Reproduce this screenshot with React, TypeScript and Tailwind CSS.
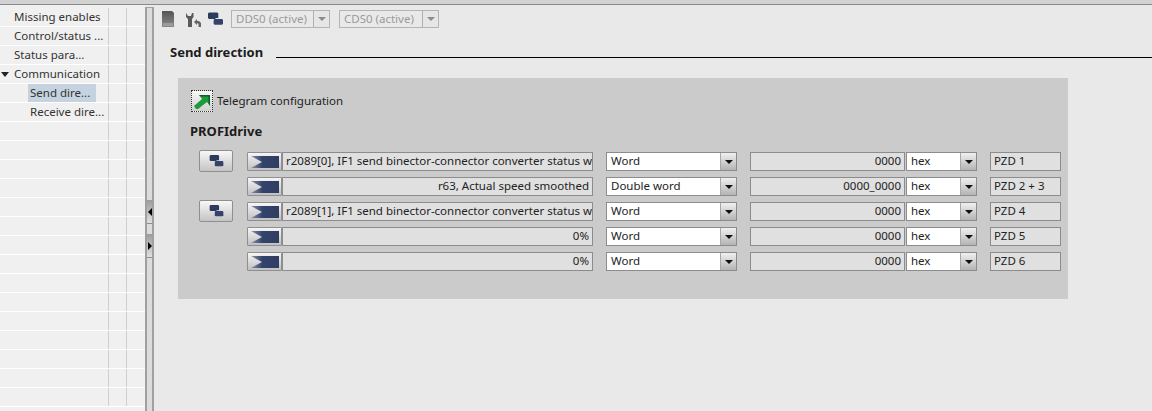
const font = { fontFamily: '"Noto Sans", "Open Sans", sans-serif' };

const navRows = [
  { label: "Missing enables", indent: "pl-[14px]" },
  { label: "Control/status ...", indent: "pl-[14px]" },
  { label: "Status para...", indent: "pl-[14px]" },
  { label: "Communication", indent: "pl-[14px]", open: true },
  { label: "Send dire...", indent: "pl-[28px]", selected: true },
  { label: "Receive dire...", indent: "pl-[30px]" },
];

const rows = [
  { button: true, source: "r2089[0], IF1 send binector-connector converter status word", left: true, type: "Word", value: "0000", pzd: "PZD 1" },
  { button: false, source: "r63, Actual speed smoothed", left: false, type: "Double word", value: "0000_0000", pzd: "PZD 2 + 3" },
  { button: true, source: "r2089[1], IF1 send binector-connector converter status word", left: true, type: "Word", value: "0000", pzd: "PZD 4" },
  { button: false, source: "0%", left: false, type: "Word", value: "0000", pzd: "PZD 5" },
  { button: false, source: "0%", left: false, type: "Word", value: "0000", pzd: "PZD 6" },
];

function BlocksIcon({ className }: { className: string }) {
  return (
    <svg viewBox="0 0 16 14" className={className}>
      <path d="M1 0 H10 L11 1 V6 H8 V7 H1 L0 6 V1 Z" fill="#2c3a5c" />
      <path d="M7 7 H15 L16 8 V12 L15 13 H7 L6 12 V8 Z" fill="#34436b" />
    </svg>
  );
}

function ArrowButton() {
  return (
    <div className="h-[19px] w-[35px] shrink-0 rounded-[1px] border border-[#8f8f8f] bg-gradient-to-b from-[#f6f6f6] to-[#c0c0c0] flex items-center justify-center">
      <svg viewBox="0 0 28 12" className="w-[28px] h-[12px]">
        <defs>
          <linearGradient id="pennant" x1="0" x2="1" y1="0" y2="0">
            <stop offset="0" stopColor="#8a93a8" />
            <stop offset="0.4" stopColor="#34436b" />
            <stop offset="1" stopColor="#2f3d62" />
          </linearGradient>
        </defs>
        <path d="M0 0 H28 V12 H0 L11 6 Z" fill="url(#pennant)" />
      </svg>
    </div>
  );
}

function DropArrow({ disabled }: { disabled?: boolean }) {
  return (
    <div className={`w-[16px] h-full shrink-0 flex items-center justify-center border-l ${disabled ? "border-[#b0b0b0] bg-[#e6e6e6]" : "border-[#a8a8a8] bg-gradient-to-b from-[#f0f0f0] to-[#b4b4b4]"}`}>
      <div className={`w-0 h-0 border-x-[4px] border-x-transparent border-t-[4px] ${disabled ? "border-t-[#8c8c8c]" : "border-t-[#111]"}`} />
    </div>
  );
}

function Select({ value, className }: { value: string; className: string }) {
  return (
    <div className={`h-[19px] shrink-0 flex border border-[#8c8c8c] bg-white ${className}`}>
      <div className="flex-1 pl-[4px] text-[11.5px] leading-[16px] text-[#222]">{value}</div>
      <DropArrow />
    </div>
  );
}

function NavRow({ label, indent, open, selected }: { label: string; indent: string; open?: boolean; selected?: boolean }) {
  return (
    <div className="flex h-[19px] shrink-0 border-b border-white">
      <div className={`relative w-[109px] shrink-0 border-r border-[#cfcfcf] ${indent} text-[11.5px] leading-[18px] text-[#333] whitespace-nowrap`}>
        {open && <div className="absolute left-[1px] top-[7px] w-0 h-0 border-x-[4px] border-x-transparent border-t-[5px] border-t-[#222]" />}
        {selected ? <span className="block w-[68px] pl-[2px] bg-[#c5d3e0]">{label}</span> : label}
      </div>
      <div className="w-[18px] shrink-0 border-r border-[#cfcfcf]" />
      <div className="flex-1" />
    </div>
  );
}

export default function App() {
  return (
    <div className="w-[1152px] h-[411px] overflow-hidden bg-[#e9e9e9] flex flex-col" style={font}>
      <div className="h-[5px] shrink-0 bg-[#d2d2d2] border-b border-[#8a8a8a]" />
      <div className="flex flex-1 min-h-0">
        {/* Tree panel */}
        <div className="w-[145px] shrink-0 bg-[#f0f0f0] pt-[3px] flex flex-col">
          {navRows.map((row) => (
            <NavRow key={row.label} {...row} />
          ))}
          {Array.from({ length: 15 }).map((_, i) => (
            <NavRow key={i} label="" indent="" />
          ))}
        </div>

        {/* Splitter */}
        <div className="w-[9px] shrink-0 mt-[2px] border-x-2 border-t border-[#a0a0a0] bg-[#dcdcdc] flex flex-col pt-[192px]">
          <div className="h-[24px] mb-[10px] bg-gradient-to-b from-[#9c9c9c] to-[#e0e0e0] border-b border-[#8c8c8c] flex items-center">
            <div className="w-0 h-0 border-y-[4px] border-y-transparent border-r-[4px] border-r-black ml-[1px]" />
          </div>
          <div className="h-[24px] bg-gradient-to-b from-[#9c9c9c] to-[#e0e0e0] border-b border-[#8c8c8c] flex items-center">
            <div className="w-0 h-0 border-y-[4px] border-y-transparent border-l-[4px] border-l-black ml-[1px]" />
          </div>
        </div>

        {/* Content */}
        <div className="flex-1 min-w-0 pl-[8px] pt-[5px]">
          <div className="flex items-center h-[18px]">
            <svg viewBox="0 0 12 16" className="w-[12px] h-[16px]">
              <defs>
                <linearGradient id="chip" x1="0" x2="0" y1="0" y2="1">
                  <stop offset="0" stopColor="#555" />
                  <stop offset="1" stopColor="#8a8a8a" />
                </linearGradient>
              </defs>
              <path d="M0 0 H10 L12 2 V16 H0 Z" fill="url(#chip)" />
              <path d="M1 12 H11 V15 H1 Z" fill="#e4e4e4" />
              <path d="M2 12 V15 M4 12 V15 M6 12 V15 M8 12 V15 M10 12 V15" stroke="#555" strokeWidth="1" />
            </svg>
            <svg viewBox="0 0 15 14" className="w-[15px] h-[14px] ml-[12px] mt-[2px]">
              <path d="M0 0 L2 3 H5 L6 0 H7.5 V4 L6 6 V14 H2 V6 L0 4 Z" fill="#5a5a5a" />
              <path d="M8 9 L11 6 V8 H13 L15 10 V14 H12.5 V11 L11 10 V12 Z" fill="#666" />
            </svg>
            <BlocksIcon className="w-[15px] h-[14px] ml-[7px]" />
            <div className="w-[99px] h-[18px] ml-[8px] flex border border-[#b4b4b4] bg-[#e9e9e9]">
              <div className="flex-1 pl-[4px] text-[11.5px] leading-[16px] text-[#9a9a9a] whitespace-nowrap overflow-hidden">DDS0 (active)</div>
              <DropArrow disabled />
            </div>
            <div className="w-[100px] h-[18px] ml-[9px] flex border border-[#b4b4b4] bg-[#e9e9e9]">
              <div className="flex-1 pl-[4px] text-[11.5px] leading-[16px] text-[#9a9a9a] whitespace-nowrap overflow-hidden">CDS0 (active)</div>
              <DropArrow disabled />
            </div>
          </div>

          <div className="flex items-end ml-[8px] mt-[13px] h-[20px]">
            <div className="text-[13px] leading-[17px] font-bold text-[#1c1c1c] whitespace-nowrap">Send direction</div>
            <div className="flex-1 h-px bg-black ml-[13px] mb-[3px]" />
          </div>

          <div className="ml-[16px] mt-[17px] w-[890px] h-[221px] bg-[#cbcbcb] pt-[11px] pl-[12px] flex flex-col">
            <div className="flex items-center h-[24px]">
              <div className="w-[22px] h-[22px] ml-[1px] border border-dotted border-[#333] bg-gradient-to-b from-[#f8f8f8] to-[#d0d0d0] flex items-center justify-center">
                <svg viewBox="0 0 18 18" className="w-[18px] h-[18px]">
                  <path d="M3 17 L1 14 L9 7 L6 3 H17 V14 L14 10 L5 17 Z" fill="#1f9a3c" />
                  <path d="M6 3 H17 V14 L15.5 11 V4.5 H8 Z" fill="#0f5f28" />
                </svg>
              </div>
              <span className="ml-[4px] text-[11.5px] text-[#222]">Telegram configuration</span>
            </div>
            <div className="mt-[9px] h-[18px] text-[13px] leading-[18px] font-bold text-[#1c1c1c]">PROFIdrive</div>

            <div className="mt-[12px] flex flex-col gap-[6px]">
              {rows.map((row, i) => (
                <div key={i} className="relative flex items-center h-[19px]">
                  <div className="w-[57px] shrink-0" />
                  {/* copy button sits a bit over the row height */}
                  {row.button && (
                    <div className="absolute left-[9px] top-[-2px] w-[34px] h-[22px] rounded-[2px] border border-[#8f8f8f] bg-gradient-to-b from-[#f8f8f8] to-[#c4c4c4] flex items-center justify-center">
                      <BlocksIcon className="w-[17px] h-[12px]" />
                    </div>
                  )}
                  <ArrowButton />
                  <div className={`w-[311px] h-[19px] shrink-0 border border-[#8c8c8c] bg-[#e0e0e0] px-[3px] text-[11.5px] leading-[16px] text-[#222] whitespace-nowrap overflow-hidden ${row.left ? "text-left" : "text-right"}`}>
                    {row.source}
                  </div>
                  <Select value={row.type} className="w-[131px] ml-[13px]" />
                  <div className="w-[155px] h-[19px] shrink-0 ml-[13px] border border-[#8c8c8c] bg-[#e0e0e0] px-[3px] text-right text-[11.5px] leading-[16px] text-[#222]">
                    {row.value}
                  </div>
                  <Select value="hex" className="w-[71px] ml-[1px]" />
                  <div className="w-[71px] h-[19px] shrink-0 ml-[13px] border border-[#8c8c8c] bg-[#e0e0e0] pl-[3px] text-[11.5px] leading-[16px] text-[#222]">
                    {row.pzd}
                  </div>
                </div>
              ))}
            </div>
          </div>
        </div>
      </div>
    </div>
  );
}
